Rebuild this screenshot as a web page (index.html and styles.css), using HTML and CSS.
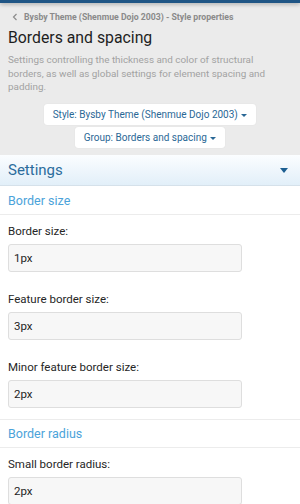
FILE: index.html
```html
<!DOCTYPE html>
<html lang="en">
<head>
    <meta charset="UTF-8">
    <meta name="viewport" content="width=device-width, initial-scale=1.0">
    <title>Borders and spacing</title>
    <link rel="stylesheet" href="styles.css">
</head>
<body>
    <div class="topbar"></div>

    <!-- Cabecalho da pagina -->
    <div class="page-head">
        <div class="crumb">
            <svg class="crumb-chev" width="6" height="8" viewBox="0 0 6 8"><path d="M4.5 1 L1.5 4 L4.5 7" fill="none" stroke="#8c8c8c" stroke-width="1.2"/></svg>
            <span>Bysby Theme (Shenmue Dojo 2003) - Style properties</span>
        </div>
        <h1 class="title">Borders and spacing</h1>
        <p class="desc">Settings controlling the thickness and color of structural borders, as well as global settings for element spacing and padding.</p>
        <div class="filters">
            <button class="filter">Style: Bysby Theme (Shenmue Dojo 2003) <span class="caret"></span></button>
            <button class="filter">Group: Borders and spacing <span class="caret"></span></button>
        </div>
    </div>

    <!-- Bloco de configuracoes -->
    <div class="block-head">
        <span>Settings</span>
        <span class="caret big"></span>
    </div>

    <div class="sub-head">Border size</div>
    <div class="section">
        <div class="row">
            <label class="lbl">Border size:</label>
            <input class="inp" type="text" value="1px">
        </div>
        <div class="row">
            <label class="lbl">Feature border size:</label>
            <input class="inp" type="text" value="3px">
        </div>
        <div class="row">
            <label class="lbl">Minor feature border size:</label>
            <input class="inp" type="text" value="2px">
        </div>
    </div>

    <div class="sub-head">Border radius</div>
    <div class="section">
        <div class="row">
            <label class="lbl">Small border radius:</label>
            <input class="inp" type="text" value="2px">
        </div>
    </div>
</body>
</html>
```

FILE: styles.css
```css
/* Estilos gerais */
body {
    font-family: Roboto, "Noto Sans", sans-serif;
    margin: 0;
    padding: 0;
    background-color: #fff;
    overflow: hidden;
}
.topbar {
    height: 3px;
    background-color: #1f5585;
    box-shadow: 0 1px 4px rgba(0, 0, 0, 0.35);
    position: relative;
}
.page-head {
    background-color: #ebebeb;
    padding: 9px 8px 7px;
}
.crumb {
    display: flex;
    align-items: center;
    gap: 6px;
    padding-left: 4px;
    font-size: 8.7px;
    line-height: 10px;
    font-weight: bold;
    color: #8a8a8a;
}
.title {
    margin: 6px 0 0;
    font-size: 15.8px;
    line-height: 20px;
    font-weight: normal;
    color: #1e1e1e;
}
.desc {
    margin: 5px 0 0;
    max-width: 272px;
    font-size: 9.9px;
    line-height: 13.7px;
    color: #a2a2a2;
}
.filters {
    margin-top: 10px;
    display: flex;
    flex-direction: column;
    align-items: center;
    gap: 2px;
}
.filter {
    font-family: inherit;
    font-size: 10px;
    height: 21px;
    padding: 0 9px;
    background-color: #fff;
    color: #2a6896;
    border: none;
    border-radius: 3px;
    box-shadow: 0 0 1px rgba(0, 0, 0, 0.12);
}
.caret {
    display: inline-block;
    width: 0;
    height: 0;
    border-left: 3px solid transparent;
    border-right: 3px solid transparent;
    border-top: 3px solid #2a6896;
    vertical-align: middle;
    margin-left: 1px;
}
.caret.big {
    border-left-width: 4.5px;
    border-right-width: 4.5px;
    border-top: 5px solid #1c5e91;
    margin-right: 4px;
}
.block-head {
    display: flex;
    justify-content: space-between;
    align-items: center;
    padding: 6px 8px;
    font-size: 15px;
    line-height: 18px;
    color: #2b6c9c;
    background: linear-gradient(to bottom, #fbfdff, #e2eff9);
    border-bottom: 1px solid #d5e1ea;
}
.sub-head {
    padding: 6px 8px;
    font-size: 12.5px;
    line-height: 15px;
    color: #4ba3da;
    border-top: 1px solid #ececec;
    border-bottom: 1px solid #ececec;
}
.block-head + .sub-head {
    border-top-color: #fff;
}
.section {
    padding: 9px 8px 11px;
    display: flex;
    flex-direction: column;
    gap: 20px;
}
.row {
    display: flex;
    flex-direction: column;
    gap: 6px;
}
.lbl {
    font-size: 11.5px;
    line-height: 14px;
    color: #262626;
}
.inp {
    box-sizing: border-box;
    width: 234px;
    height: 28px;
    padding: 0 5px;
    font-family: inherit;
    font-size: 11.5px;
    color: #1e1e1e;
    background-color: #f7f7f7;
    border: 1px solid #dedede;
    border-radius: 3px;
}
```
